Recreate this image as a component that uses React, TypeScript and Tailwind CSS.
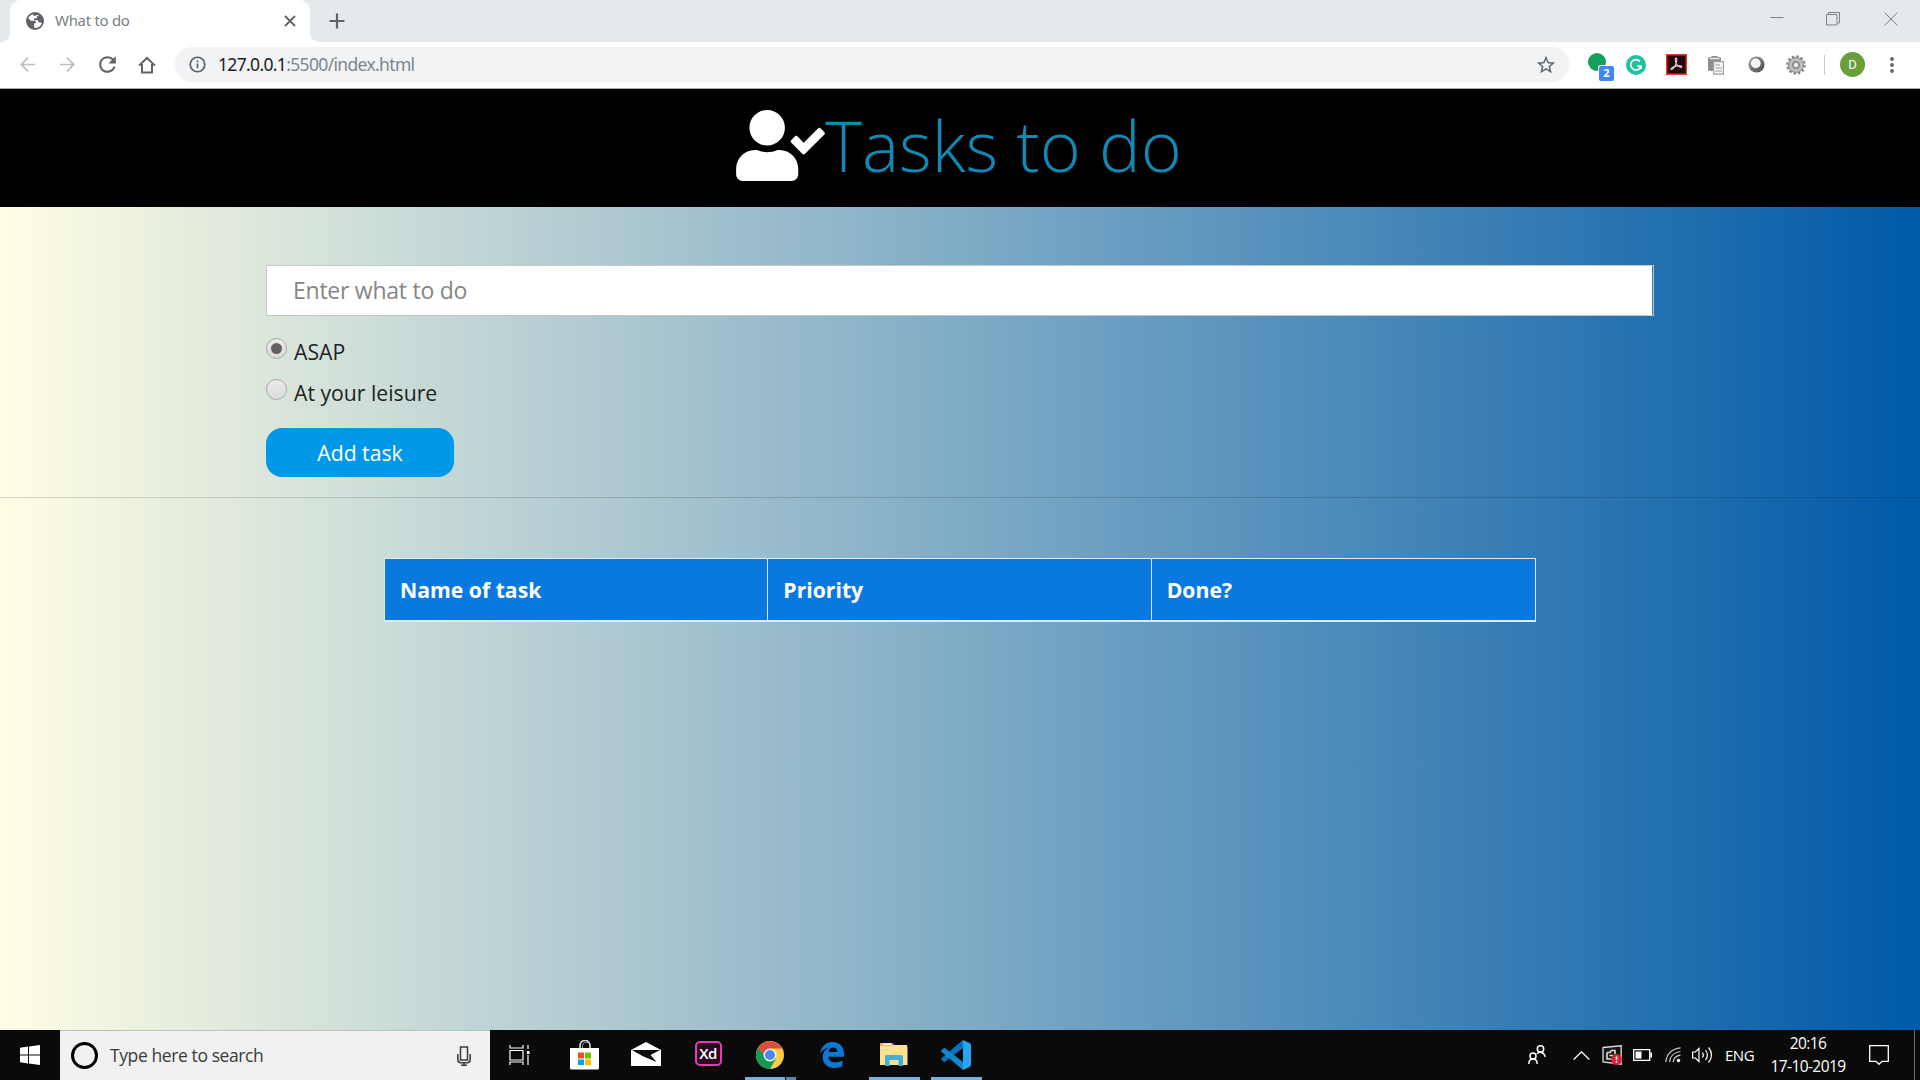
import React from "react";
import { FaUserCheck } from "react-icons/fa";
import { MdStarBorder } from "react-icons/md";

const OPEN = "font-['Open_Sans',sans-serif]";

function ToolbarIcon({ d, className }: { d: string; className: string }) {
  return (
    <svg viewBox="0 0 24 24" className={className} fill="currentColor">
      <path d={d} />
    </svg>
  );
}

function TabStrip() {
  return (
    <div className="flex h-[42px] bg-[#e5e9ec] text-[#5f6368]">
      <div className="w-[10px] bg-white">
        <div className="h-full rounded-br-[9px] bg-[#e5e9ec]" />
      </div>
      <div className="flex w-[300px] items-center rounded-t-[10px] bg-white pl-[16px] pr-[14px]">
        <svg viewBox="0 0 18 18" className="size-[18px] shrink-0">
          <circle cx="9" cy="9" r="9" fill="#5f6368" />
          <path
            d="M6.200 2.300C4.500 3 3 4.500 2.400 6.600L5 8.800h3.400c1.300 0 1.600 1 1.500 2.200l-1.800.6v2.700c0 1 .4 1.700 1.200 1.800 3.300-.1 5.900-2.300 6.600-5.300l-3.100-.2-1-2.300H8V6.500h2.300L11 4.400l1.800-.9C10.500 2.400 9.800 4 8.300 4z"
            fill="#fff"
          />
        </svg>
        <span className="relative -top-px ml-[11px] flex-1 whitespace-nowrap text-[15px] tracking-[-0.300px] text-[#7b7f83]">What to do</span>
        <svg viewBox="0 0 12 12" className="size-[12px]" stroke="currentColor" strokeWidth="1.900">
          <path d="M1 1l10 10M11 1L1 11" />
        </svg>
      </div>
      <div className="w-[10px] bg-white">
        <div className="h-full rounded-bl-[9px] bg-[#e5e9ec]" />
      </div>
      <svg viewBox="0 0 16 16" className="ml-[9px] mt-[13px] size-[16px]" stroke="currentColor" strokeWidth="2.200">
        <path d="M8 .5v15M.5 8h15" />
      </svg>
      <div className="ml-auto mr-[22px] mt-[12px] flex text-[#808386]">
        <svg viewBox="0 0 14 14" className="mr-[42px] size-[14px]" stroke="currentColor">
          <path d="M0.500 5.500h13" />
        </svg>
        <svg viewBox="0 0 14 14" className="mr-[44px] size-[14px]" stroke="currentColor" fill="none">
          <path d="M.5 2.500h10.500v10.500h-10.500zM2.500 2.500v-2h11v10.500h-2" />
        </svg>
        <svg viewBox="0 0 14 14" className="size-[14px]" stroke="currentColor">
          <path d="M.5 .5l13 13M13.500 .5l-13 13" />
        </svg>
      </div>
    </div>
  );
}

function Extensions() {
  return (
    <div className="flex items-center">
      <div className="relative ml-[19px] mt-[5px] h-[28px] w-[28px]">
        <div className="size-[18px] rounded-full bg-[#12a05c]" />
        <div className="absolute left-[11px] top-[13px] flex h-[15px] w-[15px] items-center justify-center rounded-[2px] bg-[#4285f4] text-[11px] font-bold text-white ring-1 ring-white">
          2
        </div>
      </div>
      <svg viewBox="0 0 20 20" className="ml-[10px] size-[20px]">
        <circle cx="10" cy="10" r="10" fill="#1cc29b" />
        <path d="M14 6.500a5.200 5.200 0 1 0 1 4.500h-4M15 11v3" fill="none" stroke="#fff" strokeWidth="1.700" />
      </svg>
      <svg viewBox="0 0 21 21" className="ml-[20px] size-[21px]">
        <path d="M.7.7h19.600v19.600H.7z" fill="#250807" stroke="#e8392b" strokeWidth="1.400" />
        <path
          d="M9.800 4c1.500-.1 1 2.800.3 5.300-.9 2.900-3.200 6.500-4.700 6.200-1.600-.5 1.200-2.600 4.500-3.400 3.300-.8 6.100-.3 5.900.7-.4 1.400-3.300-.2-4.900-2.300C9.500 8.500 8.700 4.300 9.800 4z"
          fill="none"
          stroke="#e4dcdc"
          strokeWidth="1.100"
        />
      </svg>
      <svg viewBox="0 0 18 20" className="ml-[20px] h-[20px] w-[18px]">
        <path d="M1 3.500A1.500 1.500 0 0 1 2.500 2H4l1-1h5l1 1h1.500A1.500 1.500 0 0 1 14 3.500V6H6v10H2.500A1.500 1.500 0 0 1 1 14.500z" fill="#8e8e8e" />
        <path d="M2.500 3.500h10" stroke="#e5e5e5" strokeWidth="1.600" />
        <path d="M6.700 6.700h9.800v12.500H6.700z" fill="#f5f5f5" stroke="#a0a0a0" strokeWidth="1.200" />
        <path d="M8.500 10h4.500M8.500 13h6.500M8.500 16h6.500" stroke="#999" strokeWidth="1.200" />
      </svg>
      <svg viewBox="0 0 18 18" className="ml-[23px] size-[17px]">
        <defs>
          <linearGradient id="ring" x1="0" y1="0" x2="1" y2="1">
            <stop offset="0" stopColor="#a5a5a5" />
            <stop offset="1" stopColor="#444" />
          </linearGradient>
        </defs>
        <circle cx="9" cy="9" r="8.500" fill="url(#ring)" />
        <circle cx="8.200" cy="7.800" r="5.200" fill="#f4f4f4" />
      </svg>
      <svg viewBox="0 0 20 20" className="ml-[21px] size-[20px]">
        <circle cx="10" cy="10" r="8.500" fill="none" stroke="#858585" strokeWidth="2.500" strokeDasharray="2.500 1.950" />
        <circle cx="10" cy="10" r="7.500" fill="#bcbcbc" stroke="#909090" />
        <circle cx="10" cy="10" r="3.600" fill="#a0a0a0" stroke="#858585" />
        <circle cx="10" cy="10" r="2" fill="#f4f4f4" />
      </svg>
      <div className="ml-[18px] h-[20px] w-px bg-[#c9cbce]" />
      <div className="ml-[15px] flex size-[25px] items-center justify-center rounded-full bg-[#689f38] font-[Roboto] text-[13px] text-white">
        D
      </div>
      <svg viewBox="0 0 4 16" className="ml-[25px] h-[16px] w-[4px]" fill="#5f6368">
        <circle cx="2" cy="2" r="1.900" />
        <circle cx="2" cy="8" r="1.900" />
        <circle cx="2" cy="14" r="1.900" />
      </svg>
    </div>
  );
}

function AddressBar() {
  return (
    <div className="flex h-[47px] items-center border-b border-[#a9a9a9] bg-white pb-px pl-[16px] text-[#5f6368]">
      <ToolbarIcon className="size-[23px] text-[#bcbec0]" d="M20 11.100H7.600l5.600-5.600L12 4.200 4.200 12l7.800 7.800 1.200-1.300-5.600-5.600H20z" />
      <ToolbarIcon className="ml-[17px] size-[23px] text-[#bcbec0]" d="M4 11.100h12.400l-5.600-5.600L12 4.200l7.800 7.800-7.800 7.800-1.200-1.300 5.600-5.600H4z" />
      <ToolbarIcon
        className="ml-[16px] size-[25px]"
        d="M17.650 6.350C16.200 4.900 14.210 4 12 4c-4.420 0-7.990 3.580-7.990 8s3.570 8 7.990 8c3.730 0 6.840-2.550 7.730-6h-2.080c-.82 2.330-3.040 4-5.650 4-3.310 0-6-2.690-6-6s2.690-6 6-6c1.660 0 3.140.69 4.220 1.780L13 11h7V4l-2.350 2.350z"
      />
      <svg viewBox="0 0 18 18" className="ml-[18px] size-[18px]" fill="none" stroke="currentColor" strokeWidth="2">
        <path d="M1 9.600L9 2l8 7.600M4 8v8.500h10V8" />
      </svg>
      <div className="ml-[19px] flex h-[35px] w-[1394px] items-center rounded-full bg-[#f1f3f4] pl-[14px] pr-[12px]">
        <svg viewBox="0 0 18 18" className="size-[17px]" fill="none" stroke="currentColor" strokeWidth="1.800">
          <circle cx="9" cy="9" r="7.700" />
          <path d="M9 8v5M9 4.800v1.900" />
        </svg>
        <span className="ml-[12px] whitespace-nowrap text-[17.500px] tracking-[-0.660px] text-[#80868b]">
          <span className="text-[#202124]">127.0.0.1</span>:5500/index.html
        </span>
        <MdStarBorder className="ml-auto size-[22px]" />
      </div>
      <Extensions />
    </div>
  );
}

function Radio({ label, checked }: { label: string; checked?: boolean }) {
  return (
    <label className="flex h-[41px] items-center">
      <span className="mb-[6px] flex size-[21px] items-center justify-center rounded-full border border-[#a6a8a6] bg-linear-to-b from-[#ececec] to-[#dadada]">
        {checked && <span className="size-[11px] rounded-full bg-[#636363]" />}
      </span>
      <span className="ml-[7px] mt-px whitespace-nowrap text-[21.200px] text-[#202423]">{label}</span>
    </label>
  );
}

function TaskPage() {
  return (
    <>
      <header className="flex h-[118px] items-center justify-center bg-black pr-[2px]">
        <FaUserCheck className="mb-[5px] h-[71px] w-[89px] text-white" />
        <h1 className="mb-[7px] whitespace-nowrap text-[70px] font-light leading-none text-[#1089b4]">Tasks to do</h1>
      </header>
      <main className="h-[823px] bg-[linear-gradient(to_right,#fffde4,#005aa7)]">
        <section className="h-[291px] border-b border-black/15 pl-[266px] pt-[58px]">
          <div className="flex h-[51px] w-[1388px] border border-[#c4c8c8] border-r-[#a9c8e0] bg-white">
            <span className="flex flex-1 items-center whitespace-nowrap border-r border-[#3f78a5] pl-[26px] text-[23px] tracking-[-0.250px] text-[#868686]">
              Enter what to do
            </span>
          </div>
          <div className="mt-[15px]">
            <Radio label="ASAP" checked />
            <Radio label="At your leisure" />
          </div>
          <button className="mt-[15px] flex h-[49px] w-[188px] items-center justify-center rounded-[16px] bg-[#0098e8] pt-px text-[21.200px] text-white">
            Add task
          </button>
        </section>
        <div className="mx-auto mt-[60px] grid h-[64px] w-[1152px] grid-cols-3 border border-b-2 border-[#dcebf5] bg-[#0a79df] text-[21.200px] font-bold text-white">
          <div className="flex items-center border-r border-[#dcebf5] pl-[15px]">Name of task</div>
          <div className="flex items-center border-r border-[#dcebf5] pl-[15px]">Priority</div>
          <div className="flex items-center pl-[15px]">Done?</div>
        </div>
      </main>
    </>
  );
}

function AppButton({ children, active, stacked }: { children: React.ReactNode; active?: boolean; stacked?: boolean }) {
  return (
    <div className="flex h-full w-[62px] flex-col items-center">
      <div className="flex h-[47px] items-center">{children}</div>
      {active && (
        <div className="flex h-[3px] w-[51px] bg-[#76b0e4]">{stacked && <div className="ml-auto w-[11px] border-l border-black bg-[#5d88b4]" />}</div>
      )}
    </div>
  );
}

function PinnedApps() {
  return (
    <div className="ml-[23px] flex h-full">
      <AppButton>
        <svg viewBox="0 0 29 30" className="mt-[2px] h-[30px] w-[29px]">
          <path d="M10 9V5.500a5 5 0 0 1 10 0V9" fill="none" stroke="#ddd" strokeWidth="1.600" />
          <path d="M12.500 9V5.500a3.500 3.500 0 0 1 5.500-2.500" fill="none" stroke="#999" strokeWidth="1" />
          <path d="M0 8h29v20a1.500 1.500 0 0 1-1.500 1.500h-26A1.500 1.500 0 0 1 0 28z" fill="#fff" />
          <path d="M8 12.500h6v6H8z" fill="#f25022" />
          <path d="M15 12.500h6v6h-6z" fill="#7fba00" />
          <path d="M8 19.500h6v5.500H8z" fill="#00a4ef" />
          <path d="M15 19.500h6v5.500h-6z" fill="#ffb900" />
        </svg>
      </AppButton>
      <AppButton>
        <svg viewBox="0 0 30 24" className="mt-px h-[24px] w-[30px]">
          <path d="M0 8L15 0l15 8v16H0z" fill="#fff" />
          <path d="M1 8h28l-9.500 5 6 7-14-6z" fill="#0a0a0a" />
        </svg>
      </AppButton>
      <AppButton>
        <div className="mb-px flex h-[25px] w-[27px] items-center justify-center rounded-[5px] border-2 border-[#e838b4] bg-[#2c0720] font-['Open_Sans'] text-[15px] font-semibold leading-none tracking-[-0.500px] text-white">
          Xd
        </div>
      </AppButton>
      <AppButton active stacked>
        <svg viewBox="0 0 28 28" className="mt-[2px] size-[28px]">
          <circle cx="14" cy="14" r="14" fill="#ffcd40" />
          <path d="M14 14L1.880 7A14 14 0 0 0 14 28l6-10.500z" fill="#119b58" />
          <path d="M14 14H8L1.880 7A14 14 0 0 1 26.100 7.500H14z" fill="#db4b3f" />
          <circle cx="14" cy="14" r="6.500" fill="#f4f4f4" />
          <circle cx="14" cy="14" r="5" fill="#4c87ee" />
        </svg>
      </AppButton>
      <AppButton>
        <svg viewBox="0 0 24 26" className="mt-[3px] h-[26px] w-[24px]" fill="#0b78d6">
          <path d="M0 11.500C1.200 4.500 6 0 12.500 0 20 0 24 5.500 24 12v2.800H8.300c.2 3.800 3.500 5.700 7 5.700 2.600 0 4.800-.7 7-2v5.800c-2.400 1.200-5 1.700-7.800 1.700C7.600 26 2.700 22 2.700 15.600c0-4.500 2.300-8 6.300-10C5 6.300 2 8.500 0 11.500zM8.500 10h8.800c0-3-1.400-4.600-4.200-4.600-2.500 0-4.200 1.700-4.600 4.600z" />
        </svg>
      </AppButton>
      <AppButton active>
        <svg viewBox="0 0 28 24" className="mt-[2px] h-[24px] w-[28px]">
          <path d="M0 0h12l2 2h13v20H0z" fill="#ffe497" />
          <path d="M0 0h12l1 3H0z" fill="#eab53c" />
          <path d="M3 1.300h8" stroke="#fff" strokeWidth="1.500" />
          <path d="M0 3.500h27.500V22H0z" fill="#ffe28f" />
          <path d="M5 23V13.500a1.500 1.500 0 0 1 1.500-1.500h15a1.500 1.500 0 0 1 1.500 1.500V23h-4.500v-6h-9v6z" fill="#3fb0dc" />
        </svg>
      </AppButton>
      <AppButton active>
        <svg viewBox="0 0 30 30" className="mt-[3px] size-[30px]">
          <path d="M22 0v8L4.500 21.500a1.500 1.500 0 0 1-2 0L.7 20a1.400 1.400 0 0 1 0-2z" fill="#0873b9" />
          <path d="M22 30v-8L4.500 8.500a1.500 1.500 0 0 0-2 0L.7 10a1.400 1.400 0 0 0 0 2z" fill="#1287cc" />
          <path d="M22 0l6.500 3A2.500 2.500 0 0 1 30 5.200v19.600a2.500 2.500 0 0 1-1.500 2.200L22 30z" fill="#29a4ee" />
        </svg>
      </AppButton>
    </div>
  );
}

function Tray() {
  return (
    <div className="ml-auto flex h-full items-center text-white">
      <svg viewBox="0 0 18 20" className="h-[20px] w-[18px]" fill="none" stroke="currentColor" strokeWidth="1.500">
        <circle cx="12.500" cy="4" r="3.200" />
        <circle cx="5" cy="11" r="3" />
        <path d="M.8 19c0-3 1.600-5 4.200-5s4.200 2 4.200 5M9 8.800c2-2.300 7.200-2.200 8.200 3" />
      </svg>
      <svg viewBox="0 0 17 9" className="ml-[27px] h-[9px] w-[17px]" fill="none" stroke="currentColor" strokeWidth="1.300">
        <path d="M.7 8.500l7.800-7.700 7.800 7.700" />
      </svg>
      <svg viewBox="0 0 20 20" className="ml-[12px] size-[20px]">
        <path d="M1 2.500L19.200.8v18.400L1 17z" fill="#181818" stroke="#ddd" strokeWidth="1.300" />
        <path d="M5 7.500h3l1.500-2h3.500V9M5 7.500V14h5M7.500 10.500h4" fill="none" stroke="#ddd" strokeWidth="1.600" />
        <circle cx="14.500" cy="14.500" r="5.500" fill="#dc2430" />
        <path d="M14.500 11.500v3.500M14.500 16.300v1.400" stroke="#fff" strokeWidth="1.500" />
      </svg>
      <svg viewBox="0 0 19 12" className="ml-[11px] h-[12px] w-[19px]">
        <path d="M.7.7h16v10.600H.7z" fill="none" stroke="#fff" strokeWidth="1.300" />
        <path d="M2.500 2.500h6v7h-6zM17.300 3.500H19v5h-1.700z" fill="#fff" />
      </svg>
      <svg viewBox="0 0 16 16" className="ml-[13px] size-[16px]" fill="none" stroke="#ccc" strokeWidth="1.200">
        <path d="M.8 15C1.500 7 7 1.500 15.500.8M4.500 15c.5-5.500 4.500-9.800 11-10.500M8.200 15c.4-3.500 3-6.300 7.300-6.800" />
        <circle cx="13.500" cy="13.500" r="1.700" fill="#fff" stroke="none" />
      </svg>
      <svg viewBox="0 0 21 18" className="ml-[11px] h-[18px] w-[21px]" fill="none" stroke="currentColor" strokeWidth="1.200">
        <path d="M.6 6h2.800L7 2.500v13L3.400 12H.6zM10.500 6.500c1 1.500 1 3.500 0 5M13.500 4c2.300 3 2.300 7 0 10M16.500 1.500c4 4.500 4 10.500 0 15" />
      </svg>
      <span className="ml-[12px] w-[30px] whitespace-nowrap text-[15px] tracking-[-0.500px]">ENG</span>
      <div className="ml-[15px] flex w-[76px] flex-col items-center whitespace-nowrap text-[15.500px] leading-[23px] tracking-[-0.600px]">
        <span>20:16</span>
        <span>17-10-2019</span>
      </div>
      <svg viewBox="0 0 20 20" className="ml-[23px] h-[20px] w-[20px]" fill="none" stroke="currentColor" strokeWidth="1.300">
        <path d="M.7.7h18.600v15.600H13l-3 3-3-3H.7z" />
      </svg>
      <div className="ml-[25px] mr-[5px] h-full w-px bg-[#6a6a6a]" />
    </div>
  );
}

function Taskbar() {
  return (
    <div className="flex h-[50px] items-center bg-[#0a0a0a]">
      <svg viewBox="0 0 20 20" className="ml-[20px] size-[20px]" fill="#fff">
        <path d="M0 2.700l8-1.100v7.900H0zM9 1.500L20 0v9.500H9zM0 10.500h8v7.900l-8-1.100zM9 10.500h11V20L9 18.500z" />
      </svg>
      <div className="ml-[20px] flex h-full w-[430px] items-center border-t border-[#bcc4c0] bg-[#f1f1f1] pl-[11px] pr-[19px]">
        <div className="size-[27px] rounded-full border-[3.500px] border-black" />
        <span className="ml-[12px] whitespace-nowrap text-[17.500px] tracking-[-0.400px] text-[#3c3c3c]">Type here to search</span>
        <svg viewBox="0 0 14 20" className="ml-auto h-[20px] w-[14px]" fill="none" stroke="#3a3a3a" strokeWidth="1.500">
          <path d="M3.500 1h7v13h-7zM.8 8v5.500c0 2 1.200 3.200 3 3.200h6.400c1.800 0 3-1.200 3-3.200V8M7 17v2.200M4 19.200h6" />
        </svg>
      </div>
      <svg viewBox="0 0 21 20" className="ml-[19px] h-[20px] w-[21px]" fill="none" stroke="#fff" strokeWidth="1.200">
        <path d="M1 0v3h13V0M1 5.500h13v9.500H1zM1 20v-3h13v3M19 0v4M19 10v10" />
        <path d="M18 6h2.500v3H18z" fill="#fff" stroke="none" />
      </svg>
      <PinnedApps />
      <Tray />
    </div>
  );
}

export default function App() {
  return (
    <div className={`h-[1080px] w-[1920px] overflow-hidden ${OPEN}`}>
      <div className="font-['Noto_Sans',sans-serif]">
        <TabStrip />
        <AddressBar />
      </div>
      <TaskPage />
      <Taskbar />
    </div>
  );
}
